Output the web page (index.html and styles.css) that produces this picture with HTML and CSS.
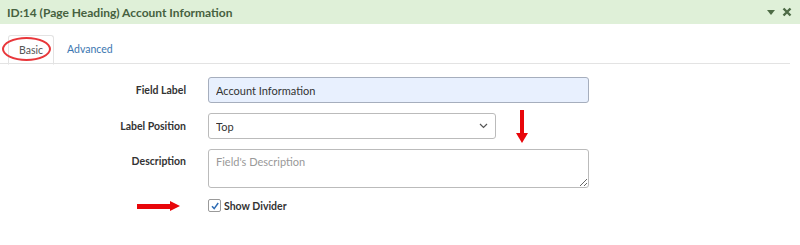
FILE: index.html
```html
<!DOCTYPE html>
<html lang="en">
<head>
    <meta charset="UTF-8">
    <title>Field Settings</title>
    <link rel="stylesheet" href="styles.css">
</head>
<body>
    <div class="panel">
        <!-- Panel Heading -->
        <div class="panel-heading">
            <span class="panel-title">ID:14 (Page Heading) Account Information</span>
            <span class="panel-tools">
                <svg class="caret" width="8" height="5" viewBox="0 0 8 5"><path d="M0 0 H8 L4 5 Z" fill="#4d6b45"/></svg>
                <svg class="close" width="10" height="10" viewBox="0 0 10 10"><path d="M1.5 1.5 L8.5 8.5 M8.5 1.5 L1.5 8.5" stroke="#4d6b45" stroke-width="2.4"/></svg>
            </span>
        </div>

        <!-- Tabs -->
        <ul class="tabs">
            <li class="tab active">Basic<span class="ring"></span></li>
            <li class="tab">Advanced</li>
        </ul>

        <!-- Form -->
        <div class="form">
            <div class="row">
                <label class="label" for="field-label">Field Label</label>
                <input class="control wide autofill" id="field-label" type="text" value="Account Information">
            </div>
            <div class="row">
                <label class="label" for="label-pos">Label Position</label>
                <div class="select-wrap">
                    <select class="control" id="label-pos">
                        <option>Top</option>
                    </select>
                    <svg class="chevron" width="9" height="6" viewBox="0 0 9 6"><path d="M1 1 L4.5 4.5 L8 1" fill="none" stroke="#555" stroke-width="1.2"/></svg>
                </div>
                <span class="arrow-down"></span>
            </div>
            <div class="row top">
                <label class="label" for="desc">Description</label>
                <textarea class="control wide" id="desc" placeholder="Field's Description"></textarea>
            </div>
            <div class="row check-row">
                <span class="label"><span class="arrow-right"></span></span>
                <label class="check">
                    <span class="box"><svg width="10" height="10" viewBox="0 0 10 10"><path d="M2 5.2 L4.2 7.6 L8.2 2" fill="none" stroke="#2f6db5" stroke-width="1.5"/></svg></span>
                    Show Divider
                </label>
            </div>
        </div>
    </div>
</body>
</html>
```

FILE: styles.css
```css
/* General */
body {
    margin: 0;
    font-family: 'Lato', 'Open Sans', sans-serif;
    font-size: 11px;
    color: #333;
    background: #fff;
}

.panel {
    width: 800px;
}

/* Heading */
.panel-heading {
    background-color: #dff0d8;
    height: 24px;
    display: flex;
    align-items: center;
    justify-content: space-between;
    padding: 0 8px 0 7px;
}

.panel-title {
    font-size: 12px;
    font-weight: 700;
    color: #466140;
}

.panel-tools {
    display: flex;
    align-items: center;
    gap: 7px;
}

/* Tabs */
.tabs {
    list-style: none;
    margin: 11px 10px 0 0;
    padding: 0 0 0 8px;
    display: flex;
    border-bottom: 1px solid #e3e3e3;
    height: 28px;
}

.tab {
    position: relative;
    padding: 0 10px;
    line-height: 29px;
    color: #3b76b0;
    font-size: 10.5px;
}

.tab.active {
    color: #555;
    border: 1px solid #e3e3e3;
    border-bottom-color: #fff;
    border-radius: 3px 3px 0 0;
    height: 28px;
    margin-right: 3px;
}

.ring {
    position: absolute;
    left: -7px;
    top: 1px;
    width: 45px;
    height: 20px;
    border: 2.5px solid #e8363a;
    border-radius: 50%;
}

/* Form */
.form {
    padding-top: 13px;
    display: flex;
    flex-direction: column;
    gap: 10px;
}

.row {
    display: flex;
    align-items: center;
    position: relative;
}

.row.top {
    align-items: flex-start;
}

.label {
    width: 208px;
    padding-right: 22px;
    text-align: right;
    font-weight: 700;
    font-size: 10.5px;
    color: #333;
    box-sizing: border-box;
}

.row.top .label {
    padding-top: 6px;
}

.control {
    font-family: 'Lato', 'Open Sans', sans-serif;
    font-size: 11px;
    color: #333;
    height: 26px;
    border: 1px solid #bbb;
    border-radius: 3px;
    padding: 0 7px;
    box-sizing: border-box;
    background: #fff;
    outline: none;
}

.wide {
    width: 381px;
}

.autofill {
    background-color: #e8f0fe;
    border-color: #a6aebd;
}

.select-wrap {
    position: relative;
}

select.control {
    width: 288px;
    appearance: none;
    -webkit-appearance: none;
}

.chevron {
    position: absolute;
    right: 8px;
    top: 10px;
}

textarea.control {
    height: 39px;
    padding: 5px 7px;
    resize: vertical;
}

textarea::placeholder {
    color: #999;
}

/* Checkbox */
.check-row {
    margin-top: 1px;
}

.check {
    display: flex;
    align-items: center;
    gap: 3px;
    font-weight: 700;
    font-size: 10.5px;
    color: #333;
}

.box {
    width: 11px;
    height: 11px;
    border: 1px solid #9a9a9a;
    border-radius: 2px;
    background: #fff;
    display: flex;
    align-items: center;
    justify-content: center;
}

/* Annotation arrows */
.arrow-down {
    position: absolute;
    left: 520px;
    top: -3px;
    width: 4px;
    height: 23px;
    background: #e8060a;
}

.arrow-down::after {
    content: "";
    position: absolute;
    left: -4px;
    top: 23px;
    border-left: 6px solid transparent;
    border-right: 6px solid transparent;
    border-top: 10px solid #e8060a;
}

.arrow-right {
    display: inline-block;
    position: relative;
    width: 33px;
    height: 5px;
    background: #e8060a;
    margin-right: 16px;
    vertical-align: middle;
}

.arrow-right::after {
    content: "";
    position: absolute;
    left: 33px;
    top: -3px;
    border-top: 5.5px solid transparent;
    border-bottom: 5.5px solid transparent;
    border-left: 10px solid #e8060a;
}
```
